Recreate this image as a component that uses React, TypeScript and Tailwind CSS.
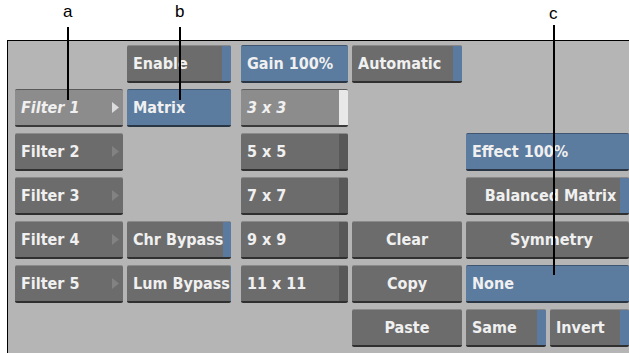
import React from 'react';

type Tab = 'blue' | 'dark' | 'white' | null;
type Variant = 'gray' | 'blue' | 'sel';

interface BtnProps {
  label: string;
  variant?: Variant;
  tab?: Tab;
  center?: boolean;
  arrow?: boolean;
  italic?: boolean;
  className?: string;
  textClass?: string;
}

function Btn({ label, variant = 'gray', tab = null, center = false, arrow = false, italic = false, className = '', textClass = '' }: BtnProps) {
  const bg =
    variant === 'blue' ? 'bg-[#5b7b9f] border-t-[#3e5672] border-b-[#2b3645]' :
    variant === 'sel' ? 'bg-[#8c8c8c] border-t-[#5a5a5a] border-b-[#3a3a3a]' :
    'bg-[#6c6c6c] border-t-[#8a8a8a] border-b-[#303030]';
  return (
    <div className={`relative flex items-center h-full rounded-[2px] border-t border-b-2 overflow-hidden ${bg} ${className}`}>
      <span
        className={`flex-1 whitespace-nowrap text-[16px] font-bold text-[#f0f0f0] ${center ? 'text-center' : 'pl-[6px]'} ${italic ? 'italic' : ''} ${textClass}`}
        style={{ fontFamily: '"DejaVu Sans Condensed", "DejaVu Sans", sans-serif' }}
      >
        {label}
      </span>
      {arrow && (
        <svg width="7" height="11" viewBox="0 0 7 11" className="mr-[4px] shrink-0">
          <polygon points="0,0 7,5.5 0,11" fill={variant === 'sel' ? '#dcdcdc' : '#828282'} />
        </svg>
      )}
      {tab === 'blue' && <div className="w-[9px] self-stretch bg-[#5a7aa0] shrink-0" />}
      {tab === 'dark' && <div className="w-[9px] self-stretch bg-[#585858] shrink-0" />}
      {tab === 'white' && <div className="w-[9px] self-stretch bg-[#e8e8e8] shrink-0" />}
    </div>
  );
}

export default function App() {
  return (
    <div className="relative w-[629px] h-[353px] bg-white overflow-hidden flex flex-col" style={{ fontFamily: '"Liberation Sans", Arial, sans-serif' }}>
      <div className="h-[40px] shrink-0" />
      <div className="flex-1 ml-[7px] border-t border-l border-black bg-[#b5b5b5] pt-[4px] pl-[7px]">
        <div className="grid grid-cols-[108px_104px_2px_107px_110px_163px] grid-rows-[repeat(7,38px)] gap-x-1 gap-y-[6px]">
          <Btn className="col-start-2 row-start-1" label="Enable" tab="blue" />
          <Btn className="col-start-4 row-start-1" label="Gain 100%" variant="blue" />
          <Btn className="col-start-5 row-start-1" label="Automatic" tab="blue" />

          <Btn className="col-start-1 row-start-2" label="Filter 1" variant="sel" arrow italic />
          <Btn className="col-start-2 row-start-2" label="Matrix" variant="blue" />
          <Btn className="col-start-4 row-start-2" label="3 x 3" variant="sel" tab="white" italic />

          <Btn className="col-start-1 row-start-3" label="Filter 2" arrow />
          <Btn className="col-start-4 row-start-3" label="5 x 5" tab="dark" />
          <Btn className="col-start-6 row-start-3" label="Effect 100%" variant="blue" />

          <Btn className="col-start-1 row-start-4" label="Filter 3" arrow />
          <Btn className="col-start-4 row-start-4" label="7 x 7" tab="dark" />
          <Btn className="col-start-6 row-start-4" label="Balanced Matrix" tab="blue" center textClass="pl-[15px]" />

          <Btn className="col-start-1 row-start-5" label="Filter 4" arrow />
          <Btn className="col-start-2 row-start-5" label="Chr Bypass" tab="blue" />
          <Btn className="col-start-4 row-start-5" label="9 x 9" tab="dark" />
          <Btn className="col-start-5 row-start-5" label="Clear" center />
          <Btn className="col-start-6 row-start-5" label="Symmetry" center textClass="pl-[8px]" />

          <Btn className="col-start-1 row-start-6" label="Filter 5" arrow />
          <Btn className="col-start-2 row-start-6" label="Lum Bypass" tab="blue" />
          <Btn className="col-start-4 row-start-6" label="11 x 11" tab="dark" />
          <Btn className="col-start-5 row-start-6" label="Copy" center />
          <Btn className="col-start-6 row-start-6" label="None" variant="blue" />

          <Btn className="col-start-5 row-start-7" label="Paste" center />
          <div className="col-start-6 row-start-7 flex gap-1">
            <Btn className="w-[80px] shrink-0" label="Same" tab="blue" />
            <Btn className="flex-1" label="Invert" tab="blue" />
          </div>
        </div>
      </div>

      {/* callouts */}
      <span className="absolute left-[63px] top-[3px] text-[17px] leading-none text-black">a</span>
      <div className="absolute left-[67px] top-[27px] w-[2px] h-[73px] bg-black" />
      <span className="absolute left-[175px] top-[3px] text-[17px] leading-none text-black">b</span>
      <div className="absolute left-[179px] top-[27px] w-[2px] h-[73px] bg-black" />
      <span className="absolute left-[549px] top-[5px] text-[17px] leading-none text-black">c</span>
      <div className="absolute left-[553px] top-[25px] w-[2px] h-[250px] bg-black" />
    </div>
  );
}
